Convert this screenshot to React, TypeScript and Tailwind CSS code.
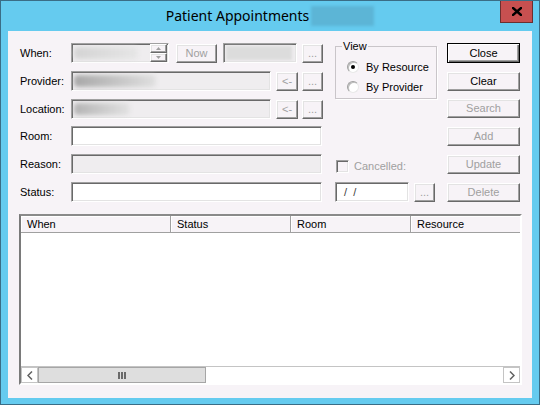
import React from "react";

const sunken =
  "border border-t-[#a0a0a0] border-l-[#a0a0a0] border-b-white border-r-white shadow-[inset_1px_1px_0_#696969,inset_-1px_-1px_0_#e3e3e3]";
const raised =
  "border border-t-white border-l-white border-b-[#696969] border-r-[#696969] shadow-[inset_-1px_-1px_0_#a0a0a0,inset_1px_1px_0_#e3e3e3]";

function Btn({
  children,
  disabled,
  className = "",
  isDefault,
}: {
  children: React.ReactNode;
  disabled?: boolean;
  className?: string;
  isDefault?: boolean;
}) {
  if (isDefault) {
    return (
      <div
        className={
          "flex items-center justify-center bg-[#f7f3f7] border border-[#000] text-[11px] text-black shadow-[inset_1px_1px_0_#fff,inset_-1px_-1px_0_#696969,inset_-2px_-2px_0_#a0a0a0] " +
          className
        }
      >
        {children}
      </div>
    );
  }
  return (
    <div
      className={
        "flex items-center justify-center bg-[#f7f3f7] text-[11px] " +
        raised +
        " " +
        (disabled ? "text-[#a0a0a0] " : "text-black ") +
        className
      }
    >
      {children}
    </div>
  );
}

function Label({ children }: { children: React.ReactNode }) {
  return <div className="w-[51px] shrink-0 text-[11px] text-black leading-none">{children}</div>;
}

function Blur({ w, from, to }: { w: string; from: string; to: string }) {
  return (
    <div className={"h-[12px] ml-[2px] blur-[2px] rounded-sm " + w + " " + from + " " + to + " bg-gradient-to-r"} />
  );
}

function Radio({ checked, label }: { checked?: boolean; label: string }) {
  return (
    <div className="flex items-center h-[20px]">
      <div className="w-[12px] h-[12px] rounded-full border border-t-[#a0a0a0] border-l-[#a0a0a0] border-b-[#e8e8e8] border-r-[#e8e8e8] bg-white flex items-center justify-center shadow-[inset_1px_1px_0_#bdbdbd]">
        {checked && <div className="w-[4px] h-[4px] rounded-full bg-black" />}
      </div>
      <span className="ml-[7px] text-[11px] text-black leading-none">{label}</span>
    </div>
  );
}

function Arrow({ dir }: { dir: "up" | "down" }) {
  return (
    <svg width="5" height="3" viewBox="0 0 5 3">
      {dir === "up" ? (
        <path d="M0 3 L2.5 0 L5 3 Z" fill="#a0a0a0" />
      ) : (
        <path d="M0 0 L2.5 3 L5 0 Z" fill="#a0a0a0" />
      )}
    </svg>
  );
}

export default function App() {
  return (
    <div
      className="w-[540px] h-[405px] bg-[#65cbef] border border-[#3a6d86] flex flex-col relative overflow-hidden"
      style={{ fontFamily: '"Liberation Sans", Arial, sans-serif' }}
    >
      {/* Title bar */}
      <div className="h-[30px] shrink-0 flex items-center justify-center">
        <span
          className="text-[14px] text-black leading-none"
          style={{ fontFamily: '"Noto Sans", "Open Sans", sans-serif' }}
        >
          Patient Appointments
        </span>
        <div className="w-[63px] h-[20px] ml-[2px] bg-[#5cb5d6] blur-[1.5px]" />
      </div>
      <div className="absolute top-[-1px] right-[6px] w-[33px] h-[23px] bg-[#c75050] border border-[#6b2f2f] flex items-center justify-center">
        <svg width="10" height="9" viewBox="0 0 10 9">
          <path d="M1 1 L9 8 M9 1 L1 8" stroke="#000" strokeWidth="2.4" strokeLinecap="square" />
        </svg>
      </div>

      {/* Client area */}
      <div className="mx-[7px] h-[367px] bg-[#f7f3f7] flex flex-col">
        <div className="h-[171px] flex pt-[9px] pl-[12px]">
          {/* Left form */}
          <div className="w-[303px] mt-[3px] flex flex-col">
            <div className="flex items-center h-[20px]">
              <Label>When:</Label>
              <div className={"w-[98px] h-[20px] bg-[#efedef] flex items-center " + sunken}>
                <div className="flex-1 flex items-center">
                  <Blur w="w-[64px]" from="from-[#d4d4d4]" to="to-[#e6e6e6]" />
                </div>
                <div className="w-[17px] h-[18px] flex flex-col mr-[1px]">
                  <div className={"h-[9px] flex items-center justify-center bg-[#f7f3f7] " + raised}>
                    <Arrow dir="up" />
                  </div>
                  <div className={"h-[9px] flex items-center justify-center bg-[#f7f3f7] " + raised}>
                    <Arrow dir="down" />
                  </div>
                </div>
              </div>
              <Btn disabled className="w-[41px] h-[19px] ml-[7px]">
                Now
              </Btn>
              <div className={"w-[74px] h-[20px] ml-[6px] bg-[#efedef] flex items-center " + sunken}>
                <div className="h-[14px] w-[66px] ml-[2px] bg-[#dcdcdc] blur-[1.5px]" />
              </div>
              <Btn disabled className="w-[21px] h-[19px] ml-[5px]">
                ...
              </Btn>
            </div>

            <div className="flex items-center h-[20px] mt-[8px]">
              <Label>Provider:</Label>
              <div className={"w-[200px] h-[20px] bg-[#efedef] flex items-center " + sunken}>
                <Blur w="w-[82px]" from="from-[#a8a8a8]" to="to-[#e0e0e0]" />
              </div>
              <Btn disabled className="w-[22px] h-[19px] ml-[5px]">
                &lt;-
              </Btn>
              <Btn disabled className="w-[21px] h-[19px] ml-[4px]">
                ...
              </Btn>
            </div>

            <div className="flex items-center h-[20px] mt-[8px]">
              <Label>Location:</Label>
              <div className={"w-[200px] h-[20px] bg-[#efedef] flex items-center " + sunken}>
                <Blur w="w-[56px]" from="from-[#b4b4b4]" to="to-[#e2e2e2]" />
              </div>
              <Btn disabled className="w-[22px] h-[19px] ml-[5px]">
                &lt;-
              </Btn>
              <Btn disabled className="w-[21px] h-[19px] ml-[4px]">
                ...
              </Btn>
            </div>

            <div className="flex items-center h-[20px] mt-[7px]">
              <Label>Room:</Label>
              <div className={"w-[251px] h-[20px] bg-white " + sunken} />
            </div>

            <div className="flex items-center h-[20px] mt-[8px]">
              <Label>Reason:</Label>
              <div className={"w-[251px] h-[20px] bg-[#efedef] " + sunken} />
            </div>

            <div className="flex items-center h-[20px] mt-[8px]">
              <Label>Status:</Label>
              <div className={"w-[251px] h-[20px] bg-white " + sunken} />
            </div>
          </div>

          {/* Middle column */}
          <div className="w-[102px] ml-[12px] flex flex-col">
            <fieldset className="border border-[#c9c5c9] shadow-[1px_1px_0_#fff] h-[59px]">
              <legend className="ml-[6px] px-[1px] text-[11px] leading-[12px] text-black">View</legend>
              <div className="mt-[5px] pl-[11px]">
                <Radio checked label="By Resource" />
                <Radio label="By Provider" />
              </div>
            </fieldset>
            <div className="flex items-center h-[14px] mt-[60px] ml-[1px]">
              <div className={"w-[13px] h-[13px] bg-[#f7f3f7] " + sunken} />
              <span className="ml-[5px] text-[11px] text-[#a0a0a0] leading-none">Cancelled:</span>
            </div>
            <div className="flex items-center mt-[9px]">
              <div className={"w-[74px] h-[20px] bg-white flex items-center " + sunken}>
                <span className="ml-[8px] text-[11px] text-[#404040] whitespace-pre leading-none">/  /</span>
              </div>
              <Btn disabled className="w-[21px] h-[19px] ml-[5px]">
                ...
              </Btn>
            </div>
          </div>

          {/* Buttons */}
          <div className="w-[73px] ml-[10px] mt-[3px] flex flex-col">
            <Btn isDefault className="h-[20px]">
              Close
            </Btn>
            <Btn className="h-[19px] mt-[9px]">Clear</Btn>
            <Btn disabled className="h-[19px] mt-[8px]">
              Search
            </Btn>
            <Btn disabled className="h-[19px] mt-[9px]">
              Add
            </Btn>
            <Btn disabled className="h-[19px] mt-[9px]">
              Update
            </Btn>
            <Btn disabled className="h-[19px] mt-[9px]">
              Delete
            </Btn>
          </div>
        </div>

        {/* List view */}
        <div className="ml-[11px] mt-[12px] w-[503px] h-[171px] flex flex-col border-2 border-t-[#8a8a8a] border-l-[#7a7a7a] border-b-white border-r-white bg-white">
          <div className="h-[17px] flex bg-[#f7f3f7] border-b border-[#a0a0a0] text-[11px] text-black leading-none">
            <div className="w-[150px] flex items-center pl-[6px] border-r border-[#a0a0a0] shadow-[inset_1px_1px_0_#fff]">When</div>
            <div className="w-[120px] flex items-center pl-[6px] border-r border-[#a0a0a0] shadow-[inset_1px_1px_0_#fff]">Status</div>
            <div className="w-[120px] flex items-center pl-[6px] border-r border-[#a0a0a0] shadow-[inset_1px_1px_0_#fff]">Room</div>
            <div className="flex-1 flex items-center pl-[6px] shadow-[inset_1px_1px_0_#fff]">Resource</div>
          </div>
          <div className="flex-1" />
          <div className="h-[17px] flex bg-white border-t border-[#c4c4c4]">
            <div className="w-[17px] h-full border border-[#c4c4c4] flex items-center justify-center">
              <svg width="6" height="9" viewBox="0 0 6 9">
                <path d="M5 0.5 L1 4.5 L5 8.5" stroke="#606060" strokeWidth="1.5" fill="none" />
              </svg>
            </div>
            <div className="w-[168px] h-full bg-[#dedede] border border-[#a6a6a6] flex items-center justify-center gap-[1px]">
              <div className="w-[2px] h-[7px] bg-[#6a6a6a]" />
              <div className="w-[2px] h-[7px] bg-[#6a6a6a]" />
              <div className="w-[2px] h-[7px] bg-[#6a6a6a]" />
            </div>
            <div className="flex-1" />
            <div className="w-[17px] h-full border border-[#c4c4c4] flex items-center justify-center">
              <svg width="6" height="9" viewBox="0 0 6 9">
                <path d="M1 0.5 L5 4.5 L1 8.5" stroke="#606060" strokeWidth="1.5" fill="none" />
              </svg>
            </div>
          </div>
        </div>
      </div>
    </div>
  );
}
